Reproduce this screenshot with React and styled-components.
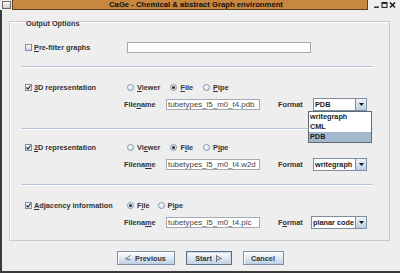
import React from "react";
import styled, { createGlobalStyle } from "styled-components";

const Global = createGlobalStyle`
  html, body { margin: 0; padding: 0; background: #eeeeee; }
  body { font-family: "Liberation Sans", Arial, sans-serif; color: #333333; }
  #root { width: 400px; height: 273px; overflow: hidden; }
`;

const Window = styled.div`
  width: 400px;
  height: 273px;
  display: flex;
  flex-direction: column;
  background: #eeeeee;
  overflow: hidden;
`;

const TitleBar = styled.div`
  flex: 0 0 10px;
  height: 10px;
  display: flex;
  align-items: flex-start;
`;

const AppIcon = styled.div`
  box-sizing: border-box;
  width: 9px;
  height: 8px;
  margin: 1px 1px 0 2px;
  border: 1px solid #6a6a6a;
  background: linear-gradient(#ffffff, #c8c8c8);
`;

const TitleStrip = styled.div`
  box-sizing: border-box;
  flex: 0 0 356px;
  height: 10px;
  background: #c8873e;
  border: 1px solid #5a4024;
  border-top: none;
  font-weight: bold;
  font-size: 7.7px;
  line-height: 9px;
  color: #111;
  text-align: center;
  padding-left: 12px;
  white-space: nowrap;
`;

const WinButtons = styled.div`
  display: flex;
  gap: 1px;
  margin: 2px 0 0 5px;
`;

const Body = styled.div`
  flex: 1;
  display: flex;
  flex-direction: column;
  border-left: 2px solid #3a3a3a;
  border-bottom: 2px solid #3a3a3a;
`;

const Group = styled.div`
  box-sizing: border-box;
  width: 381px;
  margin: 11px 0 0 7px;
  border: 1px solid #c9c9c9;
  box-shadow: inset 1px 1px 0 #ffffff;
  padding: 0 0 11px 12px;
  display: flex;
  flex-direction: column;
`;

const GroupTitle = styled.div`
  height: 8px;
  line-height: 8px;
  margin-top: -2px;
  padding-left: 4px;
  font-weight: bold;
  font-size: 7.3px;
  color: #333;
`;

const Row = styled.div`
  display: flex;
  align-items: center;
  height: ${(p) => p.$h || 12}px;
  margin-top: ${(p) => p.$mt || 0}px;
  padding-left: ${(p) => p.$pl || 0}px;
`;

const Separator = styled.div`
  width: 351px;
  height: 1px;
  background: #b4c4dc;
  border-bottom: 1px solid #ffffff;
  margin-top: ${(p) => p.$mt}px;
`;

const Label = styled.span`
  font-weight: bold;
  font-size: 7.3px;
  line-height: 9px;
  color: #333;
  white-space: nowrap;
`;

const U = styled.span`
  text-decoration: underline;
  text-underline-offset: 1px;
`;

const CheckCell = styled.div`
  flex: 0 0 102px;
  display: flex;
  align-items: center;
  gap: 2px;
  padding-left: 3px;
`;

const Box = styled.span`
  box-sizing: border-box;
  width: 7px;
  height: 7px;
  border: 1px solid #7d8ea0;
  background: linear-gradient(#ffffff, #c9d8e8);
  display: flex;
  align-items: center;
  justify-content: center;
`;

const RadioGroup = styled.div`
  display: flex;
  align-items: center;
  gap: ${(p) => p.$gap || 10}px;
`;

const RadioItem = styled.div`
  display: flex;
  align-items: center;
  gap: 3px;
`;

const Circle = styled.span`
  box-sizing: border-box;
  width: 7px;
  height: 7px;
  border-radius: 50%;
  border: 1px solid #8797a8;
  background: radial-gradient(circle at 40% 35%, #ffffff, #c6d6e6);
  display: flex;
  align-items: center;
  justify-content: center;
  &::after {
    content: "";
    display: ${(p) => (p.$on ? "block" : "none")};
    width: 3px;
    height: 3px;
    border-radius: 50%;
    background: #2c2c2c;
  }
`;

const Field = styled.div`
  box-sizing: border-box;
  width: ${(p) => p.$w}px;
  height: 11px;
  border: 1px solid #a2abb4;
  background: #ffffff;
  font-size: 7.9px;
  line-height: 9px;
  padding-left: 1px;
  color: #444;
  white-space: nowrap;
  overflow: hidden;
`;

const FieldLabel = styled(Label)`
  flex: 0 0 ${(p) => p.$w}px;
`;

const FormatLabel = styled(Label)`
  flex: 0 0 ${(p) => p.$w}px;
  margin-left: 18px;
`;

const ComboWrap = styled.div`
  position: relative;
  box-sizing: border-box;
  width: ${(p) => p.$w}px;
  height: 13px;
  border: 1px solid #7d8ea0;
  background: #ffffff;
  display: flex;
`;

const ComboText = styled.div`
  flex: 1;
  font-weight: bold;
  font-size: 7.3px;
  line-height: 11px;
  padding-left: 1px;
  color: #222;
  white-space: nowrap;
  overflow: hidden;
`;

const ComboArrow = styled.div`
  flex: 0 0 10px;
  border-left: 1px solid #7d8ea0;
  background: linear-gradient(#eef3f9, #b9cfe4);
  display: flex;
  align-items: center;
  justify-content: center;
`;

const Popup = styled.div`
  position: absolute;
  left: -6px;
  top: 12px;
  width: 64px;
  box-sizing: border-box;
  border: 1px solid #5d6b78;
  background: #ffffff;
  z-index: 5;
`;

const PopupItem = styled.div`
  height: 10px;
  line-height: 10px;
  font-weight: bold;
  font-size: 7.3px;
  padding-left: 1px;
  color: #222;
  background: ${(p) => (p.$sel ? "#a3b8cc" : "#ffffff")};
`;

const ButtonBar = styled.div`
  display: flex;
  justify-content: center;
  margin-top: 10px;
  padding-right: 2px;
  gap: 11px;
`;

const Button = styled.div`
  box-sizing: border-box;
  width: ${(p) => p.$w}px;
  height: 14px;
  border: 1px solid ${(p) => (p.$def ? "#5d7186" : "#7d8ea0")};
  box-shadow: ${(p) => (p.$def ? "inset 0 0 0 1px #c7d7e8" : "inset 1px 1px 0 #ffffff")};
  background: linear-gradient(#ffffff 0%, #e2ebf4 45%, #bcd0e4 100%);
  display: flex;
  align-items: center;
  justify-content: center;
  gap: 4px;
  font-weight: bold;
  font-size: 7.3px;
  color: #333;
`;

const Check = () => (
  <svg width="5" height="5" viewBox="0 0 5 5">
    <path d="M0.5 2.5 L2 4 L4.5 0.5" stroke="#222" strokeWidth="1.1" fill="none" />
  </svg>
);

const CheckBox = ({ on }) => <Box>{on && <Check />}</Box>;

const Radio = ({ on, children }) => (
  <RadioItem>
    <Circle $on={on} />
    <Label>{children}</Label>
  </RadioItem>
);

const Arrow = () => (
  <svg width="5" height="3" viewBox="0 0 5 3">
    <path d="M0 0 H5 L2.5 3 Z" fill="#111" />
  </svg>
);

const Combo = ({ value, open, w }) => (
  <ComboWrap $w={w}>
    <ComboText>{value}</ComboText>
    <ComboArrow>
      <Arrow />
    </ComboArrow>
    {open && (
      <Popup>
        <PopupItem>writegraph</PopupItem>
        <PopupItem>CML</PopupItem>
        <PopupItem $sel>PDB</PopupItem>
      </Popup>
    )}
  </ComboWrap>
);

const FileRow = ({ mt, name, file, format, value, open, wide }) => (
  <Row $h={13} $mt={mt} $pl={102}>
    <FieldLabel $w={42}>{name}</FieldLabel>
    <Field $w={94}>{file}</Field>
    <FormatLabel $w={wide ? 33 : 35}>{format}</FormatLabel>
    <Combo value={value} open={open} w={wide ? 56 : 54} />
  </Row>
);

const PrevIcon = () => (
  <svg width="6" height="6" viewBox="0 0 6 6">
    <path d="M5.5 0.5 L0.5 4 L5.5 4.8" stroke="#555" strokeWidth="0.8" fill="none" />
  </svg>
);

const StartIcon = () => (
  <svg width="6" height="7" viewBox="0 0 6 7">
    <path d="M0.5 0 V7 M0.5 1 L5.5 3.5 L0.5 5" stroke="#555" strokeWidth="0.8" fill="none" />
  </svg>
);

const MinIcon = () => (
  <svg width="7" height="6" viewBox="0 0 7 6">
    <rect x="1" y="4.5" width="5" height="1.3" fill="#111" />
  </svg>
);
const MaxIcon = () => (
  <svg width="7" height="6" viewBox="0 0 7 6">
    <rect x="1" y="0.6" width="5" height="4.8" fill="none" stroke="#111" strokeWidth="1" />
    <rect x="1" y="0.5" width="5" height="1.3" fill="#111" />
  </svg>
);
const CloseIcon = () => (
  <svg width="7" height="6" viewBox="0 0 7 6">
    <path d="M1 0.5 L6 5.5 M6 0.5 L1 5.5" stroke="#111" strokeWidth="1.4" />
  </svg>
);

export default function App() {
  return (
    <>
      <Global />
      <Window>
        <TitleBar>
          <AppIcon />
          <TitleStrip>CaGe - Chemical &amp; abstract Graph environment</TitleStrip>
          <WinButtons>
            <MinIcon />
            <MaxIcon />
            <CloseIcon />
          </WinButtons>
        </TitleBar>
        <Body>
          <Group>
            <GroupTitle>Output Options</GroupTitle>
            <Row $mt={13}>
              <CheckCell>
                <CheckBox />
                <Label>
                  <U>P</U>re-filter graphs
                </Label>
              </CheckCell>
              <Field $w={184} />
            </Row>
            <Separator $mt={13} />

            <Row $mt={13}>
              <CheckCell>
                <CheckBox on />
                <Label>
                  <U>3</U>D representation
                </Label>
              </CheckCell>
              <RadioGroup>
                <Radio>
                  <U>V</U>iewer
                </Radio>
                <Radio on>
                  <U>F</U>ile
                </Radio>
                <Radio>
                  <U>P</U>ipe
                </Radio>
              </RadioGroup>
            </Row>
            <FileRow
              mt={5}
              name={<>File<U>n</U>ame</>}
              file="tubetypes_l5_m0_t4.pdb"
              format="Format"
              value="PDB"
              open
            />
            <Separator $mt={17} />

            <Row $mt={11}>
              <CheckCell>
                <CheckBox on />
                <Label>
                  <U>2</U>D representation
                </Label>
              </CheckCell>
              <RadioGroup>
                <Radio>
                  Vi<U>e</U>wer
                </Radio>
                <Radio on>
                  F<U>i</U>le
                </Radio>
                <Radio>
                  P<U>i</U>pe
                </Radio>
              </RadioGroup>
            </Row>
            <FileRow
              mt={5}
              name={<>Filena<U>m</U>e</>}
              file="tubetypes_l5_m0_t4.w2d"
              format="Format"
              value="writegraph"
            />
            <Separator $mt={13} />

            <Row $mt={13}>
              <CheckCell>
                <CheckBox on />
                <Label>
                  <U>A</U>djacency information
                </Label>
              </CheckCell>
              <RadioGroup $gap={8}>
                <Radio on>
                  F<U>i</U>le
                </Radio>
                <Radio>
                  P<U>i</U>pe
                </Radio>
              </RadioGroup>
            </Row>
            <FileRow
              mt={5}
              name={<>Filena<U>m</U>e</>}
              file="tubetypes_l5_m0_t4.plc"
              format={<>F<U>o</U>rmat</>}
              value="planar code"
              wide
            />
          </Group>
          <ButtonBar>
            <Button $w={58}>
              <PrevIcon />
              Previous
            </Button>
            <Button $w={46} $def>
              Start
              <StartIcon />
            </Button>
            <Button $w={41}>Cancel</Button>
          </ButtonBar>
        </Body>
      </Window>
    </>
  );
}
